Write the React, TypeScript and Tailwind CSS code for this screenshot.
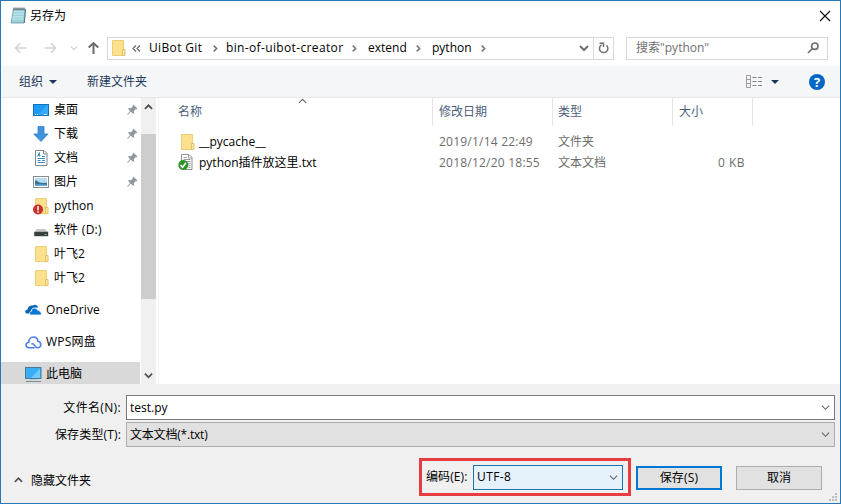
import type { ReactNode } from "react";

function Chevron({ dir, color = "#606060", w = 1.5, size = 9 }: { dir: "up" | "down" | "right"; color?: string; w?: number; size?: number }) {
  const d = { up: "M1 6.5 5 2.5 9 6.5", down: "M1 3 5 7 9 3", right: "M3 1.8 6.300 5 3 8.200" }[dir];
  return (
    <svg width={size} height={size} viewBox="0 0 10 10" fill="none" stroke={color} strokeWidth={w} className="shrink-0">
      <path d={d} />
    </svg>
  );
}

function FolderShape() {
  return (
    <>
      <path d="M.5 .5h11v15h-11z" fill="#fce08e" stroke="#ecce76" />
      <path d="M10.500 9.500h2.500v6h-2.500z" fill="#fdeaa8" stroke="#e3c060" />
    </>
  );
}

function Folder() {
  return (
    <svg width="14" height="16" viewBox="0 0 14 16" className="shrink-0"><FolderShape /></svg>
  );
}

function Notepad() {
  return (
    <svg width="17" height="17" viewBox="0 0 17 17" className="shrink-0">
      <path d="M3.500 2h12L14 16H1z" fill="#9bd0dc" stroke="#6d98a4" strokeWidth=".8" />
      <path d="M4 3h10l-1.200 10.500H2z" fill="#b9e3ea" />
      <path d="M3.500 6h10M3 8.500h10M2.700 11h10M2.400 13.200h10" stroke="#8cc6d3" strokeWidth=".7" />
      <path d="M4 .5v3M6 .5v3M8 .5v3M10 .5v3M12 .5v3M14 .5v3" stroke="#4a5960" strokeWidth="1" />
      <path d="M15.500 3 14.300 16" stroke="#567680" strokeWidth="1" />
    </svg>
  );
}

function Pin() {
  return (
    <svg width="11" height="12" viewBox="0 0 11 12" className="shrink-0">
      <path d="M6.300.5 10.500 4.500 9.500 5.200 8.800 5 6.800 7.300 7 9.300 6.200 10 3.800 7.600 0.800 11 0.300 10.500 3 7 1 4.800 1.800 4 3.800 4.300 6 2.200 5.700 1.300z" fill="#8b99a3" />
    </svg>
  );
}

function Desktop() {
  return (
    <svg width="17" height="16" viewBox="0 0 17 16" className="shrink-0">
      <rect x=".5" y="2.500" width="15" height="11" fill="#1e9bf4" stroke="#1272b9" />
      <path d="M5 13 14 3H15V13z" fill="#36aafa" />
      <path d="M2 12.500h1M4 12.500h1M11 12.500h3" stroke="#d7eeff" />
    </svg>
  );
}

function Download() {
  return (
    <svg width="17" height="16" viewBox="0 0 17 16" className="shrink-0">
      <path d="M5 .5h6v7.500h4L8 15.500.8 8H5z" fill="#3f92dc" stroke="#2f7fc6" strokeWidth=".8" />
    </svg>
  );
}

function DocumentIcon() {
  return (
    <svg width="17" height="16" viewBox="0 0 17 16" className="shrink-0">
      <path d="M2.500 .5h8.500l3 3v12H2.500z" fill="#fff" stroke="#7d868d" />
      <path d="M10.500 .5v3.500h3.500" fill="none" stroke="#7d868d" />
      <path d="M4.500 6.500 6.500 2.500v4M5 5.500h2.500M9 6.500h3M4.500 8.500h7.500M4.500 10.500h3M9 10.500h3M4.500 12.500h7.500" fill="none" stroke="#3d8fc6" />
    </svg>
  );
}

function Picture() {
  return (
    <svg width="17" height="16" viewBox="0 0 17 16" className="shrink-0">
      <rect x=".5" y="2.500" width="15" height="11" fill="#fff" stroke="#868e94" />
      <rect x="2" y="4" width="12" height="8" fill="#b8dcf2" />
      <path d="M2 6.500c3 0 3 2 6 2.300 2 .3 4 0 6 0V12H2z" fill="#3c6f92" />
      <path d="M2 10.400c4 0 8-.5 12 .3V12H2z" fill="#5fa6d5" />
    </svg>
  );
}

function AlertFolder() {
  return (
    <svg width="17" height="17" viewBox="0 0 17 17" className="shrink-0">
      <g transform="translate(2 0)"><FolderShape /></g>
      <circle cx="5" cy="11.500" r="5" fill="#c9302a" />
      <path d="M5 8v4.200M5 13.300v1.400" stroke="#fff" strokeWidth="1.500" />
    </svg>
  );
}

function Drive() {
  return (
    <svg width="17" height="16" viewBox="0 0 17 16" className="shrink-0">
      <path d="M4 7h8l3.200 3H1.200z" fill="#c6c9cb" />
      <rect x="1.200" y="9.800" width="14" height="4.400" fill="#3b3f42" />
      <path d="M11.500 12.500h2" stroke="#55d66b" />
    </svg>
  );
}

function OneDrive() {
  return (
    <svg width="17" height="12" viewBox="0 0 17 12" className="shrink-0">
      <path d="M1.800 9.500C-.8 8.800.2 5.400 2.600 5.500 2.800 2.500 5.500 1 8 1.600 9.500.1 12.500.9 13 3.500L8 4 5 9.500z" fill="#0a64b4" />
      <path d="M6.500 11C3.800 10.900 4 7.500 6.300 7.300 6.300 3.300 11.500 2.800 12.600 6.200c2.100-.4 2.500 1.300 2.400 1.600 2.300.6 1.600 3.200.2 3.200z" fill="#0878d6" stroke="#fff" strokeWidth=".8" />
    </svg>
  );
}

function WpsCloud() {
  return (
    <svg width="17" height="13" viewBox="0 0 17 13" fill="none" stroke="#4b80e8" strokeWidth="1.600" className="shrink-0">
      <path d="M9.500 11.800H4.300C.2 11.800 0 6.800 3.800 6.300 3.800 2.800 6.300 1 8.500 1c2.300 0 4.200 1.700 4.400 4.300 3.800.6 3.700 5.800.3 6.400-2.200.2-3-1.200-3.700-2.400C8.800 8 7.800 7.400 6.500 7.900" />
    </svg>
  );
}

function Computer() {
  return (
    <svg width="17" height="17" viewBox="0 0 17 17" className="shrink-0">
      <rect x=".5" y="1.500" width="15.500" height="11" fill="#39aef7" stroke="#4b7894" />
      <path d="M6 12 15 2.500V12z" fill="#71caff" />
      <path d="M5 13.500h7" stroke="#bbcbd3" />
      <path d="M1 15.500h15" stroke="#71909f" />
    </svg>
  );
}

function TextFile() {
  return (
    <svg width="16" height="17" viewBox="0 0 16 17" className="shrink-0">
      <path d="M3.500.5h7.500l3 3v12h-10.500z" fill="#fff" stroke="#8f8f8f" />
      <path d="M10.500.5v3.500h3.500M5.500 3.500h3.500M5.500 5.500h7M7.500 7.500h5M9.500 9.500h3M10.500 11.500h2M10.500 13.500h2" fill="none" stroke="#9b9b9b" />
      <circle cx="5.300" cy="11" r="5" fill="#2f9426" />
      <path d="M2.500 11.200 4.600 13.200 8 8.800" fill="none" stroke="#fff" strokeWidth="1.600" />
    </svg>
  );
}

function NavArrow({ dir, color }: { dir: "left" | "right" | "up"; color: string }) {
  const rotation = { left: "", right: "rotate-180", up: "rotate-90" }[dir];
  return (
    <svg width="13" height="12" viewBox="0 0 13 12" fill="none" stroke={color} strokeWidth={dir === "up" ? 2 : 1.600} className={`shrink-0 ${rotation}`}>
      <path d="M1.500 6H12.500M6 1.200 1.500 6 6 10.800" />
    </svg>
  );
}

function SideRow({ icon, label, pinned }: { icon: ReactNode; label: ReactNode; pinned?: boolean }) {
  return (
    <div className="flex h-6 shrink-0 items-center pl-8">
      {icon}
      <span className="ml-1">{label}</span>
      {pinned && <span className="mr-[2px] ml-auto"><Pin /></span>}
    </div>
  );
}

function TopRow({ icon, label, selected }: { icon: ReactNode; label: ReactNode; selected?: boolean }) {
  return (
    <div className={`flex h-6 shrink-0 items-center pl-6 ${selected ? "bg-[#d9d9d9]" : ""}`}>
      {icon}
      <span className="ml-1">{label}</span>
    </div>
  );
}

export default function App() {
  return (
    <div className="flex h-[504px] w-[841px] flex-col overflow-hidden border border-[#2878b5] bg-white font-['Open_Sans','Noto_Sans_CJK_SC',sans-serif] text-[12px] leading-4 whitespace-nowrap text-black">
      <header className="flex h-[29px] shrink-0 items-center pr-[9px] pl-[9px]">
        <Notepad />
        <span className="mt-px ml-[3px]">另存为</span>
        <svg width="12" height="12" viewBox="0 0 12 12" stroke="#111" strokeWidth="1.200" className="ml-auto"><path d="M1 1 11 11M11 1 1 11" /></svg>
      </header>

      <nav className="flex h-9 shrink-0 items-center pl-[13px]">
        <NavArrow dir="left" color="#d2d2d2" />
        <span className="ml-[17px]"><NavArrow dir="right" color="#d2d2d2" /></span>
        <span className="ml-[13px]"><Chevron dir="down" color="#cfcfcf" size={8} /></span>
        <span className="ml-[9px]"><NavArrow dir="up" color="#6b6b6b" /></span>
        <div className="ml-[7px] flex h-[23px] w-[507px] items-center border border-[#d9d9d9] pl-1">
          <Folder />
          <svg width="9" height="9" viewBox="0 0 9 9" fill="none" stroke="#666" strokeWidth="1.200" className="ml-[6px]"><path d="M4 1.500 1 4.500l3 3M8 1.500 5 4.500l3 3" /></svg>
          <span className="ml-2 w-[54px] tracking-[.35px]">UiBot Git</span>
          <span className="ml-2 w-[15px]"><Chevron dir="right" color="#777" w={1.800} /></span>
          <span className="w-[119px] tracking-[.36px]">bin-of-uibot-creator</span>
          <span className="ml-[5px] w-[18px]"><Chevron dir="right" color="#777" w={1.800} /></span>
          <span className="w-[41px]">extend</span>
          <span className="ml-[5px] w-[18px]"><Chevron dir="right" color="#777" w={1.800} /></span>
          <span className="w-[42px]">python</span>
          <span className="ml-[5px]"><Chevron dir="right" color="#777" w={1.800} /></span>
          <span className="mr-[4px] ml-auto"><Chevron dir="down" color="#707070" w={2} size={10} /></span>
          <span className="flex h-full w-5 items-center justify-center border-l border-[#d9d9d9]">
            <svg width="11" height="12" viewBox="0 0 11 12" fill="none" stroke="#707070" strokeWidth="1.500"><path d="M8.500 3.300A4.200 4.200 0 1 1 3.500 2.800M1.500 1.300h4v3.700" /></svg>
          </span>
        </div>
        <div className="ml-3 flex h-[23px] w-[202px] items-center border border-[#d9d9d9] pr-2 pl-[9px] text-[#707070]">
          <span>搜索"python"</span>
          <svg width="12" height="12" viewBox="0 0 12 12" fill="none" stroke="#707070" strokeWidth="1.700" className="ml-auto"><circle cx="7.800" cy="4.200" r="3.200" /><path d="M5.300 6.700 1 11" /></svg>
        </div>
      </nav>

      <div className="flex h-8 shrink-0 items-center border-b border-[#e6e6e6] bg-[#f5f6f7] pr-[15px] pl-[18px] text-[#1e395b]">
        <span>组织</span>
        <span className="ml-[6px] border-x-4 border-t-4 border-x-transparent border-t-[#1e395b]" />
        <span className="ml-[30px]">新建文件夹</span>
        <svg width="17" height="14" viewBox="0 0 17 14" fill="none" className="ml-auto">
          <path d="M.5.5h4v12h-4zM.5 4.500h4M.5 8.500h4" stroke="#a19ba0" />
          <path d="M6.500 2.500h4M12 2.500h4M6.500 6.500h4M12 6.500h4M6.500 10.500h4M12 10.500h4" stroke="#858585" />
        </svg>
        <span className="ml-[8px] border-x-4 border-t-4 border-x-transparent border-t-[#1e395b]" />
        <span className="ml-[30px] flex size-4 items-center justify-center rounded-full bg-[#0666c6] text-[13px] font-bold text-white">?</span>
      </div>

      <main className="flex h-[286px] shrink-0">
        <aside className="flex w-[139px] shrink-0 flex-col overflow-hidden">
          <SideRow icon={<Desktop />} label="桌面" pinned />
          <SideRow icon={<Download />} label="下载" pinned />
          <SideRow icon={<DocumentIcon />} label="文档" pinned />
          <SideRow icon={<Picture />} label="图片" pinned />
          <SideRow icon={<AlertFolder />} label="python" />
          <SideRow icon={<Drive />} label={<span className="tracking-[.25px]">软件 (D:)</span>} />
          <SideRow icon={<span className="w-[17px] pl-[2px]"><Folder /></span>} label="叶飞2" />
          <SideRow icon={<span className="w-[17px] pl-[2px]"><Folder /></span>} label="叶飞2" />
          <div className="mt-2 flex flex-col gap-2">
            <TopRow icon={<OneDrive />} label={<span className="tracking-[.15px]">OneDrive</span>} />
            <TopRow icon={<WpsCloud />} label={<span className="tracking-[.2px]">WPS网盘</span>} />
            <TopRow icon={<Computer />} label="此电脑" selected />
          </div>
        </aside>
        <div className="ml-px flex w-[15px] flex-col items-center bg-[#f0f0f0]">
          <span className="flex h-9 pt-[5px]"><Chevron dir="up" color="#505050" w={2} /></span>
          <span className="h-[165px] w-full bg-[#cdcdcd]" />
          <span className="mt-auto pb-[4px]"><Chevron dir="down" color="#505050" w={2} /></span>
        </div>
        <section className="ml-[2px] flex flex-1 flex-col border-l border-[#f5f5f5]">
          <div className="flex h-7 text-[#4c607a]">
            <div className="flex w-[274px] items-center border-r border-[#e5e5e5] pl-[19px]">
              <span>名称</span>
              <span className="mb-[22px] ml-[96px]"><Chevron dir="up" color="#666" w={1.200} /></span>
            </div>
            <div className="flex w-[120px] items-center border-r border-[#e5e5e5] pl-[6px]">修改日期</div>
            <div className="flex w-[120px] items-center border-r border-[#e5e5e5] pl-[5px]">类型</div>
            <div className="flex w-20 items-center border-r border-[#e5e5e5] pl-[6px]">大小</div>
          </div>
          <div className="mt-[5px] flex h-[21px] items-center pl-[22px] text-[#6d6d6d]">
            <Folder />
            <span className="ml-[4px] w-[240px] text-black">__pycache__</span>
            <span className="w-[119px] tracking-[.22px]">2019/1/14 22:49</span>
            <span>文件夹</span>
          </div>
          <div className="flex h-[21px] items-center pl-[19px] text-[#6d6d6d]">
            <TextFile />
            <span className="ml-[5px] w-[240px] text-black">python插件放这里.txt</span>
            <span className="w-[119px] tracking-[.22px]">2018/12/20 18:55</span>
            <span className="w-[120px]">文本文档</span>
            <span className="w-[67px] text-right tracking-[.5px]">0 KB</span>
          </div>
        </section>
      </main>

      <footer className="flex flex-1 flex-col bg-[#f0f0f0] pt-[11px]">
        <div className="flex h-[25px] items-center pr-[5px]">
          <span className="w-[120px] text-right tracking-[.35px]">文件名(N):</span>
          <div className="ml-[5px] flex h-full flex-1 items-center border border-[#7a7a7a] bg-white pr-[4px] pl-[3px]">
            <span>test.py</span><span className="ml-auto"><Chevron dir="down" w={1.200} /></span>
          </div>
        </div>
        <div className="mt-[2px] flex h-[25px] items-center pr-[5px]">
          <span className="w-[120px] text-right tracking-[.15px]">保存类型(T):</span>
          <div className="ml-[5px] flex h-full flex-1 items-center border border-[#adadad] bg-[#e1e1e1] pr-[4px] pl-[3px]">
            <span className="tracking-[-.2px]">文本文档(*.txt)</span><span className="ml-auto"><Chevron dir="down" w={1.200} /></span>
          </div>
        </div>
        <div className="mt-[11px] flex h-[38px] items-center pl-[13px]">
          <span className="mt-[7px]"><Chevron dir="up" color="#505050" w={1.800} /></span>
          <span className="mt-[8px] ml-[8px] w-[62px]">隐藏文件夹</span>
          <div className="ml-[326px] flex h-full w-[212px] items-center border-[3px] border-[#e83d40] pl-[4px]">
            <span className="tracking-[.1px]">编码(E):</span>
            <div className="ml-auto mr-[5px] flex h-[25px] w-[150px] items-center border border-[#1b75b0] bg-[#e5f1fb] pr-[4px] pl-[3px]">
              <span className="tracking-[.4px]">UTF-8</span><span className="ml-auto"><Chevron dir="down" w={1.200} /></span>
            </div>
          </div>
          <button className="mt-[2px] ml-[5px] h-6 w-[86px] border-2 border-[#0078d7] bg-[#e1e1e1] pb-px tracking-[.2px]">保存(S)</button>
          <button className="mt-[2px] ml-[14px] h-6 w-[86px] border border-[#adadad] bg-[#e1e1e1] pb-px">取消</button>
        </div>
        <svg width="9" height="9" viewBox="0 0 9 9" className="-mt-[3px] mr-[2px] self-end" fill="#bdbdbd">
          <path d="M6 0h2v2H6zM3 3h2v2H3zM6 3h2v2H6zM0 6h2v2H0zM3 6h2v2H3zM6 6h2v2H6z" />
        </svg>
      </footer>
    </div>
  );
}
